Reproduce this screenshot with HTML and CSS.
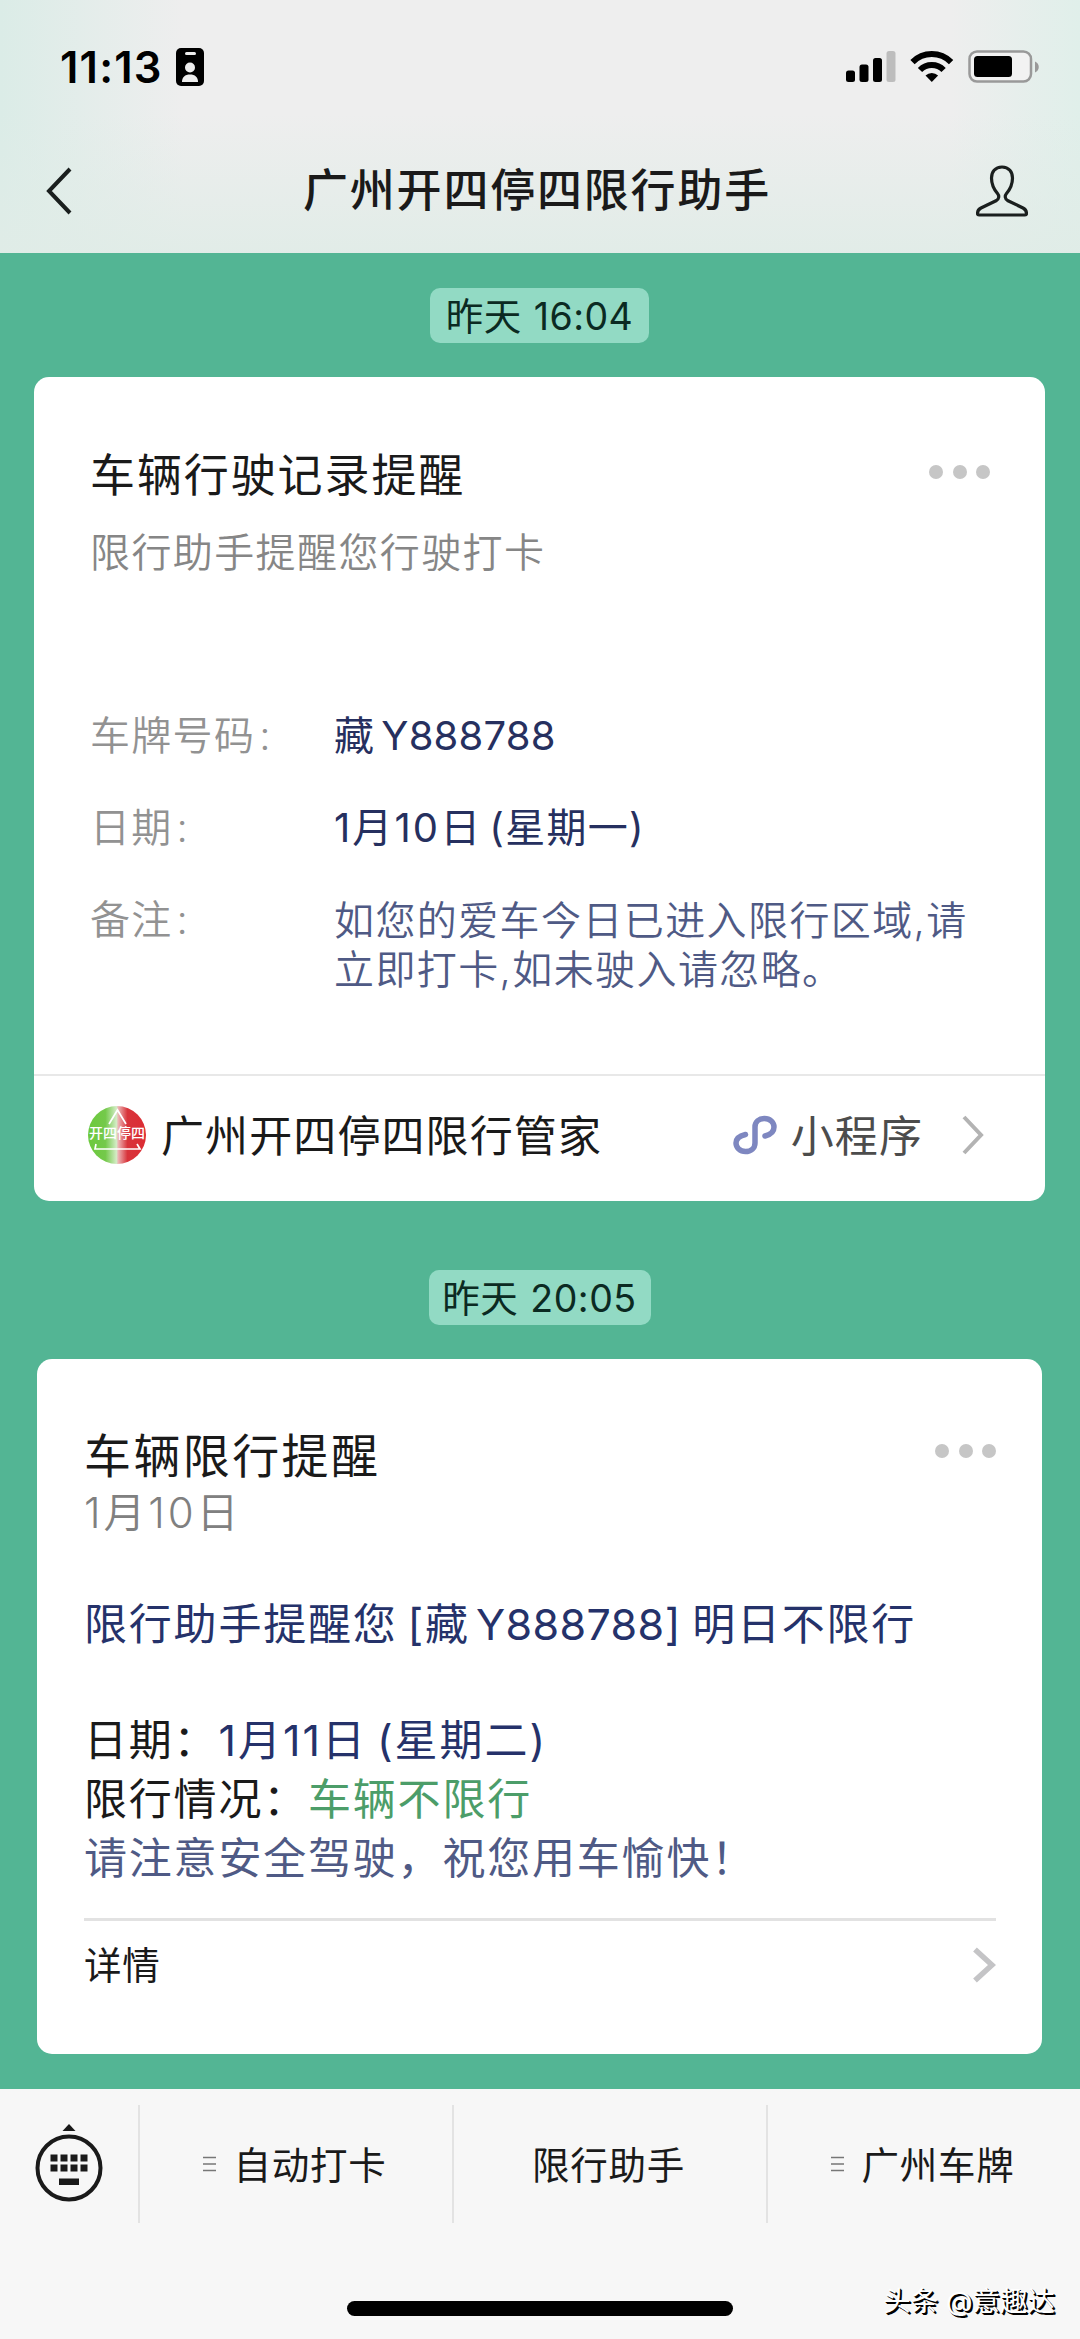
FILE: index.html
```html
<!DOCTYPE html>
<html lang="zh-CN">
<head>
<meta charset="utf-8">
<title>广州开四停四限行助手</title>
<link rel="stylesheet" href="styles.css">
</head>
<body>
<div class="screen">
  <header class="header">
    <div class="status">
      <span class="clock">11:13</span>
      <svg class="badge" width="28" height="38" viewBox="0 0 28 38"><rect width="28" height="38" rx="5"/><rect x="9" y="4" width="11" height="3" rx="1.5" fill="#eee"/><circle cx="14" cy="19.500" r="5" fill="#eee"/><path d="M6 34c0-5 3-7.500 8-7.500s8 2.500 8 7.500z" fill="#eee"/></svg>
      <svg class="signals" width="194" height="34" viewBox="0 0 194 34">
        <rect x="0" y="20.500" width="9" height="11.500" rx="2.500"/><rect x="13.500" y="14.500" width="9" height="17.500" rx="2.500"/><rect x="27" y="8" width="9" height="24" rx="2.500"/><rect x="40.500" y="1" width="9" height="31" rx="2.500" fill="#bdbdbd"/>
        <g fill="none" stroke="#000" stroke-width="6"><path d="M66.500 12.200a27 27 0 0 1 38.600 0"/><path d="M74 20a16.500 16.500 0 0 1 23.600 0"/></g><path d="M79.500 25.500a9 9 0 0 1 12.600 0l-6.300 6.500z"/>
        <rect x="123.500" y="1.500" width="61.500" height="30" rx="7.500" fill="#f2f2f2" stroke="#999" stroke-width="2.500"/><rect x="128" y="6" width="38" height="21" rx="3.500"/><path d="M189 11.500c5 2 5 9 0 11z" fill="#999"/>
      </svg>
    </div>
    <div class="nav">
      <svg class="back" width="26" height="48" viewBox="0 0 26 48"><path d="M24 2L3 24L24 46" fill="none" stroke="#1a1f1e" stroke-width="4"/></svg>
      <h1 class="nav-title">广州开四停四限行助手</h1>
      <svg class="person" width="52" height="52" viewBox="0 0 52 52"><path d="M26 2C19 2 15.500 7 15.500 13c0 8 3 12 6 15.500 2 2.500 1.500 5.500-1 7L5 43c-2.500 1.300-3.500 3-3.500 5.500 0 1 .5 1.500 1.500 1.500h46c1 0 1.500-.5 1.500-1.500 0-2.500-1-4.200-3.500-5.500l-15.500-7.500c-2.500-1.500-3-4.500-1-7 3-3.500 6-7.500 6-15.500C36.500 7 33 2 26 2z" fill="none" stroke="#1a1f1e" stroke-width="3.200"/></svg>
    </div>
  </header>

  <main class="chat">
    <time class="stamp">昨天 <span>16:04</span></time>
    <article class="card card-a">
      <div class="card-head">
        <h2 class="card-title">车辆行驶记录提醒</h2>
        <div class="dots"><i></i><i></i><i></i></div>
      </div>
      <p class="subtitle">限行助手提醒您行驶打卡</p>
      <dl class="fields">
        <dt>车牌号码<span class="colon">:</span></dt><dd>藏<span class="plate">Y888788</span></dd>
        <dt>日期<span class="colon">:</span></dt><dd><span class="date">1月10日</span><span class="paren">(星期一)</span></dd>
        <dt>备注<span class="colon">:</span></dt><dd class="note">如您的爱车今日已进入限行区域,请<br>立即打卡,如未驶入请忽略。</dd>
      </dl>
      <div class="app-row">
        <span class="avatar">
          <svg width="58" height="58" viewBox="0 0 58 58"><defs><linearGradient id="duo"><stop offset="0" stop-color="#6cc93c"/><stop offset=".3" stop-color="#74c94b"/><stop offset=".49" stop-color="#d3ecc5"/><stop offset=".52" stop-color="#ecb4b4"/><stop offset=".68" stop-color="#d8343b"/><stop offset="1" stop-color="#dc2c33"/></linearGradient></defs><circle cx="29" cy="29" r="29" fill="url(#duo)"/><path d="M21 18L29.500 4L38 18M8 38l-1 5h45l-3-5" fill="none" stroke="#fff" stroke-width="1.700"/></svg>
          <b>开四停四</b>
        </span>
        <span class="app-name">广州开四停四限行管家</span>
        <svg class="mini" width="44" height="40" viewBox="0 0 44 40"><path d="M12.500 19.500C6 21 3 24 3 28c0 4.500 4 8.500 9.500 8.500S22 33 22 28V12C22 7 26 3.500 31.500 3.500S41 7.500 41 12c0 4-3 7.500-9 9" fill="none" stroke="#7e87c0" stroke-width="5.500" stroke-linecap="round"/></svg>
        <span class="mini-label">小程序</span>
        <svg class="chev" width="22" height="40" viewBox="0 0 22 40"><path d="M2 2L19 20L2 38" fill="none" stroke="#b3b3b3" stroke-width="4"/></svg>
      </div>
    </article>

    <time class="stamp stamp-b">昨天 <span>20:05</span></time>
    <article class="card card-b">
      <div class="card-head">
        <h2 class="card-title">车辆限行提醒</h2>
        <div class="dots"><i></i><i></i><i></i></div>
      </div>
      <p class="day">1月10日</p>
      <p class="lead">限行助手提醒您<span class="bracket">[藏<span class="plate">Y888788</span>]</span>明日不限行</p>
      <p class="line">日期：<span class="navy">1月11日<span class="paren">(星期二)</span></span></p>
      <p class="line">限行情况：<span class="green">车辆不限行</span></p>
      <p class="line slate">请注意安全驾驶，祝您用车愉快！</p>
      <div class="detail">
        <span>详情</span>
        <svg width="23" height="36" viewBox="0 0 23 36"><path d="M2 2.500L19 18L2 33.500" fill="none" stroke="#c4c4c6" stroke-width="5.500"/></svg>
      </div>
    </article>
  </main>

  <footer class="footer">
    <div class="tabs">
      <div class="tab tab-kb">
        <svg width="68" height="82" viewBox="0 0 68 82"><path d="M34 2l6.500 7h-13z" fill="#1a1a1a"/><circle cx="34" cy="46" r="31.500" fill="none" stroke="#1a1a1a" stroke-width="4"/><path d="M15.500 32.500h7v7h-7zM25.500 32.500h7v7h-7zM35.500 32.500h7v7h-7zM45.500 32.500h7v7h-7zM15.500 42.500h7v7h-7zM25.500 42.500h7v7h-7zM35.500 42.500h7v7h-7zM45.500 42.500h7v7h-7zM24 56.500h20v6.500h-20z" fill="#1a1a1a"/></svg>
      </div>
      <div class="tab"><svg class="burger" width="13" height="16" viewBox="0 0 13 16"><path d="M0 1.500h13M0 8h13M0 14.500h13" stroke="#777" stroke-width="1.500"/></svg><span>自动打卡</span></div>
      <div class="tab"><span>限行助手</span></div>
      <div class="tab"><svg class="burger" width="13" height="16" viewBox="0 0 13 16"><path d="M0 1.500h13M0 8h13M0 14.500h13" stroke="#777" stroke-width="1.500"/></svg><span>广州车牌</span></div>
    </div>
    <div class="home"></div>
    <div class="credit">头条 @意趣达</div>
  </footer>
</div>
</body>
</html>
```
FILE: styles.css
```css
* { box-sizing: border-box; margin: 0; padding: 0; }
body { width: 1080px; height: 2339px; overflow: hidden; font-family: Inter, "Noto Sans CJK SC", sans-serif; font-weight: 400; color: #1a1a1a; }
.screen { display: flex; flex-direction: column; width: 1080px; height: 2339px; background: #53b594; white-space: nowrap; }
svg { display: block; flex: none; }
h1, h2 { font-weight: 400; }

.header { height: 253px; background: linear-gradient(to bottom, transparent 45%, rgba(224, 236, 231, .9)), linear-gradient(to right, #dbece7, #eeeeee 17%, #eeeeee 88%, #e0efea); }
.status { display: flex; align-items: center; height: 133px; padding: 0 40px 0 60px; }
.clock { font-size: 43.500px; font-weight: 600; letter-spacing: 1.200px; color: #000; }
.badge { margin-left: 13px; }
.signals { margin-left: auto; }
.nav { display: flex; align-items: center; height: 115px; padding: 0 52px 0 46px; }
.nav-title { flex: 1; text-align: center; font-size: 45px; font-weight: 500; letter-spacing: 1.8px; line-height: 60px; padding-top: 1px; }
.back { margin-right: 26px; }

.chat { height: 1836px; padding-top: 35px; padding-right: 1px; display: flex; flex-direction: column; align-items: center; }
.stamp { height: 55px; width: 219px; border-radius: 10px; background: #92dac4; color: #0b2a22; font-size: 37.500px; line-height: 57px; letter-spacing: .5px; display: flex; justify-content: center; gap: 12px; }
.stamp-b { width: 222px; margin-top: 69px; }
.card { background: #fff; border-radius: 15px; display: flex; flex-direction: column; }
.card-head { display: flex; justify-content: space-between; }
.dots { display: flex; gap: 9.500px; }
.dots i { width: 14px; height: 14px; border-radius: 50%; background: #c6c6c6; }

.card-a { width: 1011px; height: 824px; margin-top: 34px; padding-top: 69px; }
.card-a .card-head { padding: 0 55px 0 56px; }
.card-a .card-title { font-size: 45px; line-height: 60px; letter-spacing: 1.9px; }
.card-a .dots { margin-top: 19px; }
.subtitle { padding-left: 56px; margin-top: 17px; font-size: 40px; line-height: 60px; letter-spacing: 1.4px; color: #868686; font-weight: 350; }
.fields { display: grid; grid-template-columns: 244px 1fr; grid-template-rows: 92px 92px 1fr; padding: 0 56px; margin-top: 123px; height: 368px; font-size: 40px; line-height: 60px; letter-spacing: 1.3px; }
.fields dt { color: #929292; font-weight: 350; }
.colon { margin-left: 4px; }
.fields dd { color: #26305f; }
.plate { margin-left: 6px; letter-spacing: .2px; }
.date { letter-spacing: 2.100px; }
.paren { margin-left: 10px; }
.date + .paren { margin-left: 7px; }
.fields .note { color: #4f5a85; line-height: 49px; padding-top: 6px; font-weight: 350; letter-spacing: 1.400px; }
.app-row { display: flex; align-items: center; height: 127px; border-top: 2px solid #e8e8e8; padding: 0 61px 8px 54px; font-size: 43px; letter-spacing: 1.100px; }
.app-name, .mini-label { padding-bottom: 3px; }
.avatar { position: relative; width: 58px; height: 58px; margin-right: 15px; }
.avatar b { position: absolute; left: 1px; top: 17px; width: 56px; text-align: center; color: #fff; font-size: 14px; line-height: 20px; letter-spacing: 0; font-weight: 500; }
.mini { margin-left: auto; margin-right: 14px; }
.mini-label { color: #4c4c4c; margin-right: 39px; }

.card-b { width: 1005px; height: 695px; margin-top: 34px; padding: 67px 46px 0 47px; }
.card-b .card-title { font-size: 47px; line-height: 60px; letter-spacing: 2.400px; }
.card-b .dots { margin-top: 18px; }
.day { font-size: 42px; line-height: 50px; margin-top: 2px; color: #808080; font-weight: 350; letter-spacing: 2.900px; }
.lead { font-size: 43px; line-height: 60px; letter-spacing: 1.8px; margin-top: 56px; margin-bottom: 57px; color: #25326a; }
.lead .plate { letter-spacing: .4px; }
.bracket { margin: 0 10px; }
.line { font-size: 43px; line-height: 59px; letter-spacing: 1.8px; }
.navy { color: #25326a; letter-spacing: 2px; }
.green { color: #4c9d69; }
.slate { color: #4f5a85; }
.detail { display: flex; justify-content: space-between; align-items: center; margin-top: 30px; height: 90px; border-top: 3px solid #e2e2e2; font-size: 37.500px; letter-spacing: .7px; }
.detail span { padding-bottom: 5px; }

.footer { position: relative; height: 250px; background: #f7f7f7; padding-top: 16px; }
.tabs { display: flex; height: 118px; }
.tab { flex: 1; display: flex; align-items: center; justify-content: center; gap: 18px; border-left: 2px solid #e3e3e3; font-size: 37.500px; letter-spacing: .7px; padding-right: 3px; }
.tab span { padding-bottom: 3px; }
.tab-kb { flex: none; width: 138px; border: 0; padding: 0 0 2px; }
.home { width: 386px; height: 15px; border-radius: 8px; background: #000; margin: 78px auto 0; }
.credit { position: absolute; right: 25px; top: 192px; font-size: 27.500px; line-height: 40px; color: #fff; text-shadow: 1px 1px 0 #000, 2px 2px 0 #000; }
```
